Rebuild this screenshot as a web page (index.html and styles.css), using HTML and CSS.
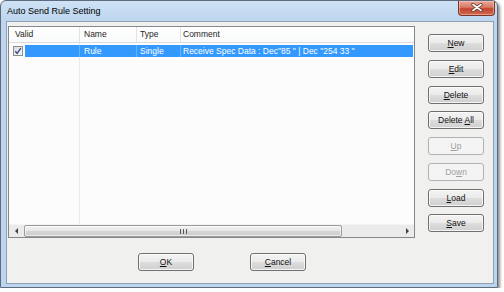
FILE: index.html
```html
<!DOCTYPE html>
<html>
<head>
<meta charset="utf-8">
<link rel="stylesheet" href="styles.css">
</head>
<body>
<div class="window">
  <div class="titlebar">
    <span class="title">Auto Send Rule Setting</span>
    <div class="close">
      <svg width="12" height="9" viewBox="0 0 12 9">
        <path d="M2 1.5 L10 7.5 M10 1.5 L2 7.5" stroke="#5a2a22" stroke-width="3.2" stroke-linecap="round"/>
        <path d="M2 1.5 L10 7.5 M10 1.5 L2 7.5" stroke="#ffffff" stroke-width="1.7" stroke-linecap="round"/>
      </svg>
    </div>
  </div>
  <div class="client">
    <div class="main">
      <div class="list">
        <div class="header">
          <div class="hcell c1">Valid</div>
          <div class="hcell c2">Name</div>
          <div class="hcell c3">Type</div>
          <div class="hcell c4">Comment</div>
        </div>
        <div class="body">
          <div class="gridline"></div>
          <div class="rows">
            <div class="row">
              <div class="check">
                <svg width="8" height="8" viewBox="0 0 8 8"><path d="M1.2 4.2 L3.2 6.3 L6.8 1.2" fill="none" stroke="#3c4f86" stroke-width="1.4"/></svg>
              </div>
              <div class="sel">
                <div class="scell s1"></div>
                <div class="scell s2">Rule</div>
                <div class="scell s3">Single</div>
                <div class="scell s4">Receive Spec Data : Dec"85 " | Dec "254 33 "</div>
              </div>
            </div>
          </div>
        </div>
        <div class="hscroll">
          <div class="sbtn left"><span class="arr-l"></span></div>
          <div class="thumb"><span class="grip"></span></div>
          <div class="track"></div>
          <div class="sbtn right"><span class="arr-r"></span></div>
        </div>
      </div>
      <div class="side">
        <div class="btn"><span><u>N</u>ew</span></div>
        <div class="btn"><span><u>E</u>dit</span></div>
        <div class="btn"><span><u>D</u>elete</span></div>
        <div class="btn"><span>Delete <u>A</u>ll</span></div>
        <div class="btn disabled"><span><u>U</u>p</span></div>
        <div class="btn disabled"><span>Do<u>w</u>n</span></div>
        <div class="btn"><span><u>L</u>oad</span></div>
        <div class="btn"><span><u>S</u>ave</span></div>
      </div>
    </div>
    <div class="footer">
      <div class="btn"><span><u>O</u>K</span></div>
      <div class="btn"><span><u>C</u>ancel</span></div>
    </div>
  </div>
</div>
</body>
</html>
```
FILE: styles.css
```css
html, body {
  margin: 0;
  padding: 0;
  background: #ffffff;
}
body {
  font-family: "Liberation Sans", Arial, sans-serif;
  font-size: 8.5px;
  color: #000;
}
.window {
  width: 498px;
  height: 288px;
  box-sizing: border-box;
  border: 1px solid #5d6b7c;
  border-radius: 6px 6px 0 0;
  background: linear-gradient(180deg, #cfe2f5 0px, #bdd5ee 20px, #bcd4ee 100%);
  box-shadow: 2px 2px 3px rgba(0, 0, 0, 0.45);
  padding: 0 3px 3px 5px;
  display: flex;
  flex-direction: column;
}
.titlebar {
  height: 20px;
  display: flex;
  align-items: flex-start;
  justify-content: space-between;
  margin-right: -2px;
}
.title {
  font-size: 9px;
  line-height: 20px;
  padding-left: 1px;
  color: #000;
}
.close {
  width: 37px;
  height: 15px;
  box-sizing: border-box;
  border: 1px solid #7d3526;
  border-top: none;
  border-radius: 0 0 4px 4px;
  background: linear-gradient(180deg, #e9a998 0%, #d77a64 45%, #c4452e 55%, #cf6a50 100%);
  box-shadow: inset 0 0 0 1px rgba(255, 220, 210, 0.45);
  display: flex;
  align-items: center;
  justify-content: center;
  margin-right: 1px;
}
.close svg { display: block; margin-top: -1px; }
.client {
  flex: 1;
  border: 1px solid #8ea0b5;
  background: #f0f0ee;
  display: flex;
  flex-direction: column;
}
.main {
  display: flex;
  padding: 4px 0 0 1px;
}
.list {
  width: 407px;
  height: 212px;
  box-sizing: border-box;
  border: 1px solid #828790;
  background: #fcfcfc;
  display: flex;
  flex-direction: column;
}
.header {
  height: 16px;
  box-sizing: border-box;
  border-bottom: 1px solid #dcdcdc;
  background: linear-gradient(180deg, #ffffff 0%, #f9fafb 100%);
  display: flex;
}
.hcell {
  box-sizing: border-box;
  line-height: 14px;
  border-right: 1px solid #e3e3e3;
  white-space: nowrap;
  color: #1e1e1e;
}
.c1 { width: 71px; padding-left: 6px; }
.c2 { width: 57px; padding-left: 4px; }
.c3 { width: 44px; padding-left: 3px; }
.c4 { flex: 1; padding-left: 2px; border-right: none; }
.body {
  flex: 1;
  display: flex;
}
.gridline {
  width: 70px;
  border-right: 1px solid #e9e9e9;
}
.rows {
  flex: 1;
  margin-left: -71px;
  padding-top: 2px;
}
.row {
  height: 12px;
  display: flex;
  align-items: stretch;
}
.check {
  width: 10px;
  height: 10px;
  box-sizing: border-box;
  margin: 1px 0 0 4px;
  border: 1px solid #8f8f8f;
  background: linear-gradient(135deg, #dcdcdc, #f6f6f6);
  display: flex;
  align-items: center;
  justify-content: center;
}
.check svg { display: block; }
.sel {
  flex: 1;
  margin-left: 2px;
  margin-right: 1px;
  background: #3399ff;
  color: #ffffff;
  display: flex;
}
.scell {
  box-sizing: border-box;
  line-height: 12px;
  white-space: nowrap;
  border-right: 1px solid #6ab3ff;
}
.s1 { width: 55px; }
.s2 { width: 57px; padding-left: 4px; }
.s3 { width: 44px; padding-left: 3px; }
.s4 { flex: 1; padding-left: 2px; border-right: none; }
.hscroll {
  height: 13px;
  background: #ebebeb;
  border-top: 1px solid #f4f4f4;
  box-sizing: border-box;
  display: flex;
}
.sbtn {
  width: 15px;
  display: flex;
  align-items: center;
  justify-content: center;
}
.sbtn.right { width: 14px; }
.arr-l {
  width: 0;
  height: 0;
  border-top: 3px solid transparent;
  border-bottom: 3px solid transparent;
  border-right: 3px solid #404040;
}
.arr-r {
  width: 0;
  height: 0;
  border-top: 3px solid transparent;
  border-bottom: 3px solid transparent;
  border-left: 3px solid #404040;
}
.thumb {
  width: 318px;
  box-sizing: border-box;
  border: 1px solid #9b9b9b;
  border-radius: 2px;
  background: linear-gradient(180deg, #f3f3f3 0%, #e6e6e6 50%, #d6d6d6 51%, #cdcdcd 100%);
  box-shadow: inset 0 0 0 1px rgba(255, 255, 255, 0.6);
  display: flex;
  align-items: center;
  justify-content: center;
}
.grip {
  width: 7px;
  height: 5px;
  background: repeating-linear-gradient(90deg, #5a5a5a 0 1px, transparent 1px 3px);
}
.track { flex: 1; }
.side {
  margin-left: 13px;
  padding-top: 8px;
  display: flex;
  flex-direction: column;
  gap: 7.75px;
}
.btn {
  width: 56px;
  height: 18px;
  box-sizing: border-box;
  border: 1px solid #707070;
  border-radius: 3px;
  background: linear-gradient(180deg, #f3f3f3 0%, #ebebeb 48%, #dddddd 52%, #cfcfcf 100%);
  box-shadow: inset 0 0 0 1px rgba(252, 252, 252, 0.8);
  display: flex;
  align-items: center;
  justify-content: center;
  color: #111;
  white-space: nowrap;
}
.btn u { text-decoration: underline; text-underline-offset: 1px; }
.btn.disabled {
  border-color: #adb2b5;
  background: #f4f4f4;
  box-shadow: none;
  color: #a0a0a0;
}
.footer {
  display: flex;
  gap: 56px;
  padding: 15px 0 0 131px;
}
```
